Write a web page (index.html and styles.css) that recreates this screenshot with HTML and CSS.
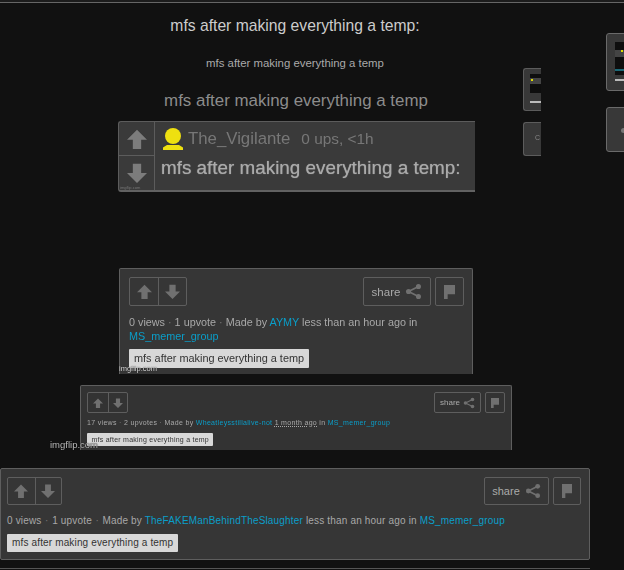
FILE: index.html
```html
<!DOCTYPE html>
<html>
<head>
<meta charset="utf-8">
<title>mfs after making everything a temp</title>
<link rel="stylesheet" href="styles.css">
</head>
<body>

<svg class="icon_defs" width="0" height="0">
  <symbol id="up" viewBox="0 0 24 24"><path d="M12 1 L24 13 H17 V24 H7 V13 H0 Z"/></symbol>
  <symbol id="down" viewBox="0 0 24 24"><path d="M12 24 L24 12 H17 V1 H7 V12 H0 Z"/></symbol>
  <symbol id="share" viewBox="0 0 24 24">
    <path d="M19 5 L5 12 L19 19" fill="none" stroke="currentColor" stroke-width="2.4"/>
    <circle cx="19" cy="5" r="3.6"/><circle cx="5" cy="12" r="3.6"/><circle cx="19" cy="19" r="3.6"/>
  </symbol>
  <symbol id="flag" viewBox="0 0 24 24" preserveAspectRatio="none"><path d="M0 0 H24 V16 H8 V24 H0 Z"/></symbol>
</svg>

<div class="top_line"></div>

<div class="meme">
  <p class="caption caption_main">mfs after making everything a temp:</p>
  <p class="caption caption_small">mfs after making everything a temp</p>
  <p class="caption caption_mid">mfs after making everything a temp</p>

  <!-- comment shot -->
  <div class="comment blur">
    <div class="comment_votes">
      <div class="comment_vote"><svg><use href="#up"/></svg></div>
      <div class="comment_vote"><svg><use href="#down"/></svg></div>
    </div>
    <div class="comment_body">
      <div class="comment_head">
        <svg class="avatar" viewBox="0 0 22 22"><circle cx="11" cy="8" r="8"/><path d="M5 17 H17 L21 19.5 V22 H1 V19.5 Z"/></svg>
        <span class="comment_user">The_Vigilante</span>
        <span class="comment_meta">0 ups, &lt;1h</span>
      </div>
      <div class="comment_text">mfs after making everything a temp:</div>
    </div>
    <span class="wm wm_comment">imgflip.com</span>
  </div>

  <!-- little thumbs on the right -->
  <div class="thumb thumb_a blur">
    <div class="thumb_shot"><i class="thumb_strip"></i><i class="thumb_yellow"></i></div>
    <i class="thumb_rule"></i>
  </div>
  <div class="thumb thumb_b blur"><span class="thumb_c">C</span></div>
  <div class="thumb thumb_c2 blur">
    <div class="thumb_shot thumb_shot_big"><i class="thumb_strip"></i><i class="thumb_yellow"></i><i class="thumb_teal"></i></div>
    <i class="thumb_rule"></i>
  </div>
  <div class="thumb thumb_d blur"><i class="thumb_dot"></i></div>

  <!-- second level -->
  <div class="panel panel_m blur">
    <div class="panel_bar">
      <div class="votes">
        <div class="vote"><svg><use href="#up"/></svg></div>
        <div class="vote"><svg><use href="#down"/></svg></div>
      </div>
      <div class="actions">
        <div class="share"><span>share</span><svg><use href="#share"/></svg></div>
        <div class="flag"><svg><use href="#flag"/></svg></div>
      </div>
    </div>
    <div class="panel_info">0 views <b>·</b> 1 upvote <b>·</b> Made by <a>AYMY</a> less than an hour ago in <a>MS_memer_group</a></div>
    <div class="tag">mfs after making everything a temp</div>
  </div>
  <span class="wm wm_m blur">imgflip.com</span>

  <!-- third level -->
  <div class="panel panel_s blur">
    <div class="panel_bar">
      <div class="votes">
        <div class="vote"><svg><use href="#up"/></svg></div>
        <div class="vote"><svg><use href="#down"/></svg></div>
      </div>
      <div class="actions">
        <div class="share"><span>share</span><svg><use href="#share"/></svg></div>
        <div class="flag"><svg><use href="#flag"/></svg></div>
      </div>
    </div>
    <div class="panel_info">17 views <b>·</b> 2 upvotes <b>·</b> Made by <a>Wheatleysstillalive-not</a> <u>1 month ago</u> in <a>MS_memer_group</a></div>
    <div class="tag">mfs after making everything a temp</div>
  </div>
  <span class="wm wm_s blur">imgflip.com</span>
</div>

<!-- real bar at the bottom -->
<div class="panel panel_main">
  <div class="panel_bar">
    <div class="votes">
      <div class="vote"><svg><use href="#up"/></svg></div>
      <div class="vote"><svg><use href="#down"/></svg></div>
    </div>
    <div class="actions">
      <div class="share"><span>share</span><svg><use href="#share"/></svg></div>
      <div class="flag"><svg><use href="#flag"/></svg></div>
    </div>
  </div>
  <div class="panel_info">0 views <b>·</b> 1 upvote <b>·</b> Made by <a>TheFAKEManBehindTheSlaughter</a> less than an hour ago in <a>MS_memer_group</a></div>
  <div class="tag">mfs after making everything a temp</div>
</div>
<div class="next_line"></div>

</body>
</html>
```

FILE: styles.css
```css
html, body {
  margin: 0;
  height: 570px;
  overflow: hidden;
}
body {
  background: #111;
  font-family: "Liberation Sans", Arial, sans-serif;
}
.icon_defs {
  position: absolute;
}
.blur {
  filter: blur(0.5px);
}
.top_line {
  height: 1px;
  border-top: 2px solid #1c1c1c;
  background: #666;
}
.meme {
  position: relative;
  height: 465px;
}

/* captions */
.caption {
  position: absolute;
  left: 0;
  width: 590px;
  margin: 0;
  text-align: center;
  white-space: nowrap;
}
.caption_main {
  top: 13px;
  font-size: 15.7px;
  line-height: 20px;
  color: #ccc;
}
.caption_small {
  top: 53px;
  font-size: 11.4px;
  line-height: 14px;
  color: #aaa;
}
.caption_mid {
  top: 88px;
  width: 592px;
  font-size: 16.9px;
  line-height: 20px;
  color: #8c8c8c;
}

/* comment shot */
.comment {
  position: absolute;
  left: 118px;
  top: 118px;
  width: 357px;
  height: 71px;
  display: flex;
  background: #3a3a3a;
  border-top: 1px solid #5c5c5c;
  border-bottom: 2px solid #626262;
  border-left: 1px solid #5c5c5c;
  border-radius: 3px 0 0 3px;
  box-sizing: border-box;
}
.comment_votes {
  width: 35px;
  border-right: 1px solid #5c5c5c;
  flex-shrink: 0;
}
.comment_vote {
  height: 34px;
  box-sizing: border-box;
  display: flex;
  align-items: center;
  justify-content: center;
  fill: #7c7c7c;
}
.comment_vote:first-child {
  border-bottom: 1px solid #5c5c5c;
}
.comment_vote svg {
  width: 20px;
  height: 20px;
}
.comment_body {
  padding: 3px 0 0 6px;
}
.comment_head {
  display: flex;
  align-items: center;
  height: 27px;
  font-size: 16.8px;
  color: #777;
}
.avatar {
  width: 22px;
  height: 22px;
  fill: #eee010;
  margin: 0 4px 0 1px;
}
.comment_meta {
  margin-left: 11px;
  font-size: 15.4px;
}
.comment_text {
  margin-top: 5px;
  font-size: 18.85px;
  line-height: 22px;
  color: #aaa;
  white-space: nowrap;
  text-shadow: 0 0 1px #999;
}
.wm {
  position: absolute;
  color: #ddd;
  white-space: nowrap;
  text-shadow: 0 0 1px #000;
}
.wm_comment {
  left: 1px;
  bottom: 0;
  font-size: 4px;
  color: #777;
  text-shadow: none;
}
.wm_m {
  left: 119px;
  top: 361px;
  font-size: 7.5px;
  line-height: 9px;
}
.wm_s {
  left: 50px;
  top: 436px;
  font-size: 9.5px;
  line-height: 11px;
  color: #bbb;
}

/* thumbs */
.thumb {
  position: absolute;
  background: #383838;
  border: 1px solid #5c5c5c;
  border-radius: 3px;
  box-sizing: border-box;
  overflow: hidden;
}
.thumb_a {
  left: 523px;
  top: 65px;
  width: 18px;
  height: 43px;
  border-right: 0;
  border-radius: 3px 0 0 3px;
}
.thumb_b {
  left: 523px;
  top: 119px;
  width: 18px;
  height: 34px;
  border-right: 0;
  border-radius: 3px 0 0 3px;
}
.thumb_c2 {
  left: 606px;
  top: 30px;
  width: 30px;
  height: 58px;
  border-color: #6a6a6a;
}
.thumb_d {
  left: 606px;
  top: 104px;
  width: 30px;
  height: 45px;
  border-color: #6a6a6a;
}
.thumb_shot {
  position: relative;
  margin: 5px 0 0 6px;
  height: 19px;
  background: #0e0e0e;
}
.thumb_shot_big {
  margin: 8px 0 0 8px;
  height: 33px;
}
.thumb_strip {
  position: absolute;
  left: 0;
  right: 0;
  top: 4px;
  height: 6px;
  background: #444;
}
.thumb_shot_big .thumb_strip {
  top: 8px;
  height: 7px;
}
.thumb_yellow {
  position: absolute;
  left: 1px;
  top: 5px;
  width: 2px;
  height: 2px;
  background: #dd0;
}
.thumb_shot_big .thumb_yellow {
  left: 6px;
  top: 8px;
}
.thumb_teal {
  position: absolute;
  left: 0;
  right: 0;
  top: 27px;
  height: 2px;
  background: #1c6a78;
}
.thumb_rule {
  display: block;
  height: 2px;
  margin: 8px 0 0 6px;
  background: #bbb;
}
.thumb_c2 .thumb_rule {
  margin: 4px 0 0 8px;
}
.thumb_c {
  display: block;
  margin: 11px 0 0 11px;
  font-size: 7px;
  line-height: 8px;
  color: #888;
}
.thumb_dot {
  display: block;
  width: 5px;
  height: 5px;
  margin: 20px 0 0 14px;
  background: #777;
  border-radius: 50%;
}

/* share panels */
.panel {
  background: #363636;
  border: 1px solid #5e5e5e;
  border-radius: 2px;
  box-sizing: border-box;
}
.panel_main {
  width: 590px;
  height: 92px;
  padding: 8px 8px 0 6px;
}
.panel_m {
  position: absolute;
  left: 119px;
  top: 265px;
  width: 354px;
  height: 106px;
  padding: 8px 8px 0 9px;
  border-bottom: 0;
  border-radius: 2px 2px 0 0;
}
.panel_s {
  position: absolute;
  left: 80px;
  top: 382px;
  width: 432px;
  height: 65px;
  padding: 6px 6px 0 6px;
  border-bottom: 0;
  border-radius: 2px 2px 0 0;
  background: #333;
}
.panel_bar {
  display: flex;
  justify-content: space-between;
}
.votes, .share, .flag {
  display: flex;
  align-items: center;
  border: 1px solid #5e5e5e;
  border-radius: 2px;
  box-sizing: border-box;
  color: #707070;
  fill: #707070;
}
.vote {
  display: flex;
  align-items: center;
  justify-content: center;
  height: 100%;
  box-sizing: border-box;
}
.vote + .vote {
  border-left: 1px solid #5e5e5e;
}
.actions {
  display: flex;
  gap: 4px;
}
.share {
  justify-content: center;
  color: #aaa;
}
.share svg {
  color: #707070;
}
.panel_info {
  color: #a8a8a8;
}
.panel_info b {
  font-weight: normal;
  color: #777;
}
.panel_info a {
  color: #0a9ec9;
}
.panel_info u {
  text-decoration: underline dotted;
}
.tag {
  display: table;
  background: #d8d8d8;
  color: #333;
  border-radius: 1px;
}

/* sizes, main */
.panel_main .votes, .panel_main .share, .panel_main .flag { height: 28px; }
.panel_main .vote { width: 26.5px; }
.panel_main .vote svg { width: 14px; height: 14px; }
.panel_main .share { width: 65px; font-size: 11px; gap: 5px; }
.panel_main .share svg { width: 16px; height: 16px; }
.panel_main .flag { width: 28px; justify-content: center; }
.panel_main .flag svg { width: 10px; height: 14px; }
.panel_main .panel_info { margin-top: 9px; font-size: 10px; line-height: 13px; letter-spacing: 0.17px; }
.panel_main .panel_info b { margin: 0 0.6px; }
.panel_main .tag { margin-top: 7px; padding: 0 5px; font-size: 10px; line-height: 18px; letter-spacing: 0.15px; }

/* sizes, m */
.panel_m .votes, .panel_m .share, .panel_m .flag { height: 29px; }
.panel_m .vote { width: 28px; }
.panel_m .vote svg { width: 15px; height: 15px; }
.panel_m .share { width: 68px; font-size: 11.5px; gap: 5px; }
.panel_m .share svg { width: 17px; height: 17px; }
.panel_m .flag { width: 29px; justify-content: center; }
.panel_m .flag svg { width: 11px; height: 14px; }
.panel_m .panel_info { margin-top: 9px; font-size: 10.8px; line-height: 14px; }
.panel_m .tag { margin-top: 6px; padding: 0 5px; font-size: 10.9px; line-height: 19px; }

/* sizes, s */
.panel_s .votes, .panel_s .share, .panel_s .flag { height: 21px; }
.panel_s .vote { width: 19.5px; }
.panel_s .vote svg { width: 10px; height: 10px; }
.panel_s .share { width: 47px; font-size: 8px; gap: 3px; }
.panel_s .share svg { width: 12px; height: 12px; }
.panel_s .flag { width: 20px; justify-content: center; }
.panel_s .flag svg { width: 8px; height: 10px; }
.panel_s .panel_info { margin-top: 4px; font-size: 7px; line-height: 12px; letter-spacing: 0.32px; }
.panel_s .tag { margin-top: 4px; padding: 0 4.5px; font-size: 7px; line-height: 13px; letter-spacing: 0.24px; }

.next_line {
  width: 590px;
  height: 1px;
  margin-top: 8px;
  background: #555;
}
```
